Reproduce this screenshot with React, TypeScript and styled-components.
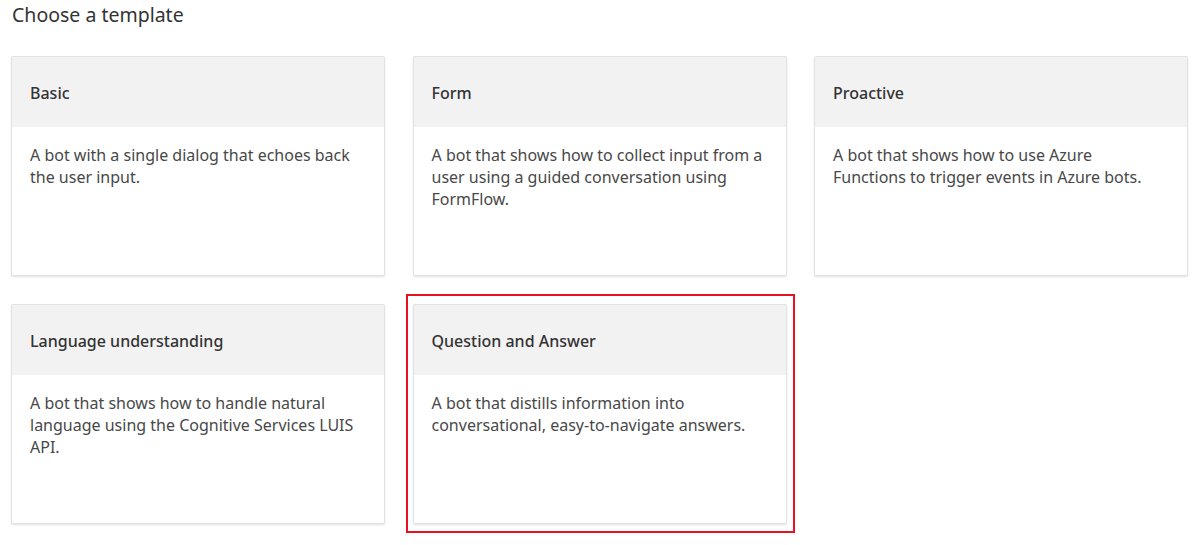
import React from "react";
import styled, { createGlobalStyle } from "styled-components";

const Global = createGlobalStyle`
  html, body { margin: 0; padding: 0; background: #ffffff; }
  body { font-family: "Noto Sans", "Open Sans", sans-serif; color: #333333; }
`;

const Page = styled.div`
  padding: 2px 10px 20px 11px;
`;

const Title = styled.h1`
  margin: 0 0 0 1px;
  font-size: 19.5px;
  font-weight: 400;
  line-height: 26px;
  color: #333333;
`;

const Grid = styled.div`
  margin-top: 28px;
  display: grid;
  grid-template-columns: 374px 374px 374px;
  column-gap: 27.5px;
  row-gap: 28px;
`;

const Card = styled.div<{ $selected?: boolean }>`
  position: relative;
  height: 220px;
  box-sizing: border-box;
  border: 1px solid #e3e3e3;
  border-radius: 2px;
  box-shadow: 0 1px 2px rgba(0, 0, 0, 0.12);
  background: #ffffff;
  display: flex;
  flex-direction: column;
  ${(p) =>
    p.$selected &&
    `
    &::after {
      content: "";
      position: absolute;
      top: -11px;
      left: -8px;
      right: -9px;
      bottom: -10px;
      border: 2.5px solid #e81123;
      pointer-events: none;
    }
  `}
`;

const CardHeader = styled.div`
  height: 70px;
  background: #f2f2f2;
  display: flex;
  align-items: center;
  padding: 2px 18px 0;
  box-sizing: border-box;
  font-size: 16px;
  font-weight: 500;
  color: #333333;
`;

const CardBody = styled.p`
  margin: 0;
  padding: 17px 18px 16px;
  font-size: 16px;
  line-height: 22px;
  color: #484848;
`;

const templates = [
  { name: "Basic", desc: "A bot with a single dialog that echoes back the user input." },
  { name: "Form", desc: "A bot that shows how to collect input from a user using a guided conversation using FormFlow." },
  { name: "Proactive", desc: "A bot that shows how to use Azure Functions to trigger events in Azure bots." },
  { name: "Language understanding", desc: "A bot that shows how to handle natural language using the Cognitive Services LUIS API." },
  { name: "Question and Answer", desc: "A bot that distills information into conversational, easy-to-navigate answers.", selected: true },
];

export default function App() {
  return (
    <>
      <Global />
      <Page>
        <Title>Choose a template</Title>
        <Grid>
          {templates.map((t) => (
            <Card key={t.name} $selected={t.selected}>
              <CardHeader>{t.name}</CardHeader>
              <CardBody>{t.desc}</CardBody>
            </Card>
          ))}
        </Grid>
      </Page>
    </>
  );
}
